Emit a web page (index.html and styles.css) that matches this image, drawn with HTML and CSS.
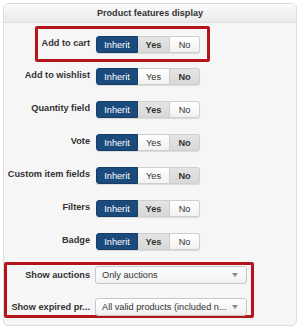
FILE: index.html
```html
<!DOCTYPE html>
<html>
<head>
<meta charset="utf-8">
<link rel="stylesheet" href="styles.css">
</head>
<body>
<div class="panel">
  <div class="panel-head">Product features display</div>
  <div class="panel-body">
    <div class="row hl-cart">
      <div class="label">Add to cart</div>
      <div class="btn-group"><span class="btn active">Inherit</span><span class="btn sel">Yes</span><span class="btn">No</span></div>
    </div>
    <div class="row">
      <div class="label">Add to wishlist</div>
      <div class="btn-group"><span class="btn active">Inherit</span><span class="btn">Yes</span><span class="btn sel">No</span></div>
    </div>
    <div class="row">
      <div class="label">Quantity field</div>
      <div class="btn-group"><span class="btn active">Inherit</span><span class="btn sel">Yes</span><span class="btn">No</span></div>
    </div>
    <div class="row">
      <div class="label">Vote</div>
      <div class="btn-group"><span class="btn active">Inherit</span><span class="btn">Yes</span><span class="btn sel">No</span></div>
    </div>
    <div class="row">
      <div class="label">Custom item fields</div>
      <div class="btn-group"><span class="btn active">Inherit</span><span class="btn">Yes</span><span class="btn sel">No</span></div>
    </div>
    <div class="row">
      <div class="label">Filters</div>
      <div class="btn-group"><span class="btn active">Inherit</span><span class="btn sel">Yes</span><span class="btn">No</span></div>
    </div>
    <div class="row">
      <div class="label">Badge</div>
      <div class="btn-group"><span class="btn active">Inherit</span><span class="btn sel">Yes</span><span class="btn">No</span></div>
    </div>
    <div class="hl-selects">
      <div class="srow">
        <div class="label">Show auctions</div>
        <div class="select"><span class="sel-text">Only auctions</span><span class="caret"></span></div>
      </div>
      <div class="srow">
        <div class="label">Show expired pr...</div>
        <div class="select"><span class="sel-text">All valid products (included n...</span><span class="caret"></span></div>
      </div>
    </div>
  </div>
</div>
</body>
</html>
```

FILE: styles.css
```css
html, body {
  margin: 0;
  padding: 0;
  background: #ffffff;
}
body {
  padding: 3px 4px 3px 3px;
  font-family: "Liberation Sans", Arial, sans-serif;
  font-size: 9px;
  color: #333333;
}
.panel {
  width: 292px;
  height: 321px;
  border: 1px solid #dcdcdc;
  border-radius: 5px;
  background: #f6f6f6;
  overflow: hidden;
}
.panel-head {
  height: 18px;
  line-height: 18px;
  text-align: center;
  font-weight: bold;
  font-size: 9.1px;
  color: #333;
  background: linear-gradient(#fbfbfb, #e9e9e9);
  border-bottom: 1px solid #dedede;
}
.panel-body {
  display: flex;
  flex-direction: column;
}
.row {
  display: flex;
  gap: 6px;
  height: 33px;
  padding-top: 6px;
  box-sizing: border-box;
  align-items: flex-start;
}
.label {
  width: 86px;
  text-align: right;
  font-weight: bold;
  font-size: 9.2px;
  line-height: 15px;
  white-space: nowrap;
  flex: none;
}
.hl-cart {
  margin: 3px 0 0 31px;
  width: 175px;
  height: 36px;
  border: 3px solid #b4141c;
  border-radius: 2px;
  padding-top: 7px;
}
.hl-cart .label {
  width: 52px;
}
.btn-group {
  display: flex;
  height: 17px;
  border-radius: 3px;
  box-shadow: 0 1px 1px rgba(0,0,0,0.12);
}
.btn {
  display: flex;
  align-items: center;
  justify-content: center;
  height: 17px;
  box-sizing: border-box;
  border: 1px solid #cfcfcf;
  border-left: none;
  background: linear-gradient(#ffffff, #f1f1f1);
  font-size: 9.2px;
  color: #333;
}
.btn:nth-child(1) { width: 42px; border-radius: 3px 0 0 3px; }
.btn:nth-child(2) { width: 32px; }
.btn:nth-child(3) { width: 30px; border-radius: 0 3px 3px 0; }
.btn.active {
  background: #1b4a7d;
  border: 1px solid #153d68;
  color: #ffffff;
}
.btn.sel {
  background: linear-gradient(#e4e4e4, #d8d8d8);
  font-weight: bold;
}
.hl-selects {
  margin-top: 2px;
  width: 250px;
  height: 56px;
  border: 3px solid #b4141c;
  border-radius: 2px;
  box-sizing: border-box;
  display: flex;
  flex-direction: column;
  gap: 14px;
  padding-top: 1px;
}
.hl-selects .label {
  width: 83px;
  padding-top: 2px;
}
.srow {
  display: flex;
  gap: 5px;
  align-items: flex-start;
}
.select {
  width: 152px;
  height: 18px;
  box-sizing: border-box;
  border: 1px solid #c8c8c8;
  border-radius: 3px;
  background: linear-gradient(#ffffff, #f0f0f0);
  display: flex;
  align-items: center;
  padding: 0 8px 0 6px;
  justify-content: space-between;
}
.sel-text {
  font-size: 9.2px;
  color: #333;
  white-space: nowrap;
}
.caret {
  width: 0;
  height: 0;
  border-left: 3px solid transparent;
  border-right: 3px solid transparent;
  border-top: 4px solid #8a8a8a;
}
```
